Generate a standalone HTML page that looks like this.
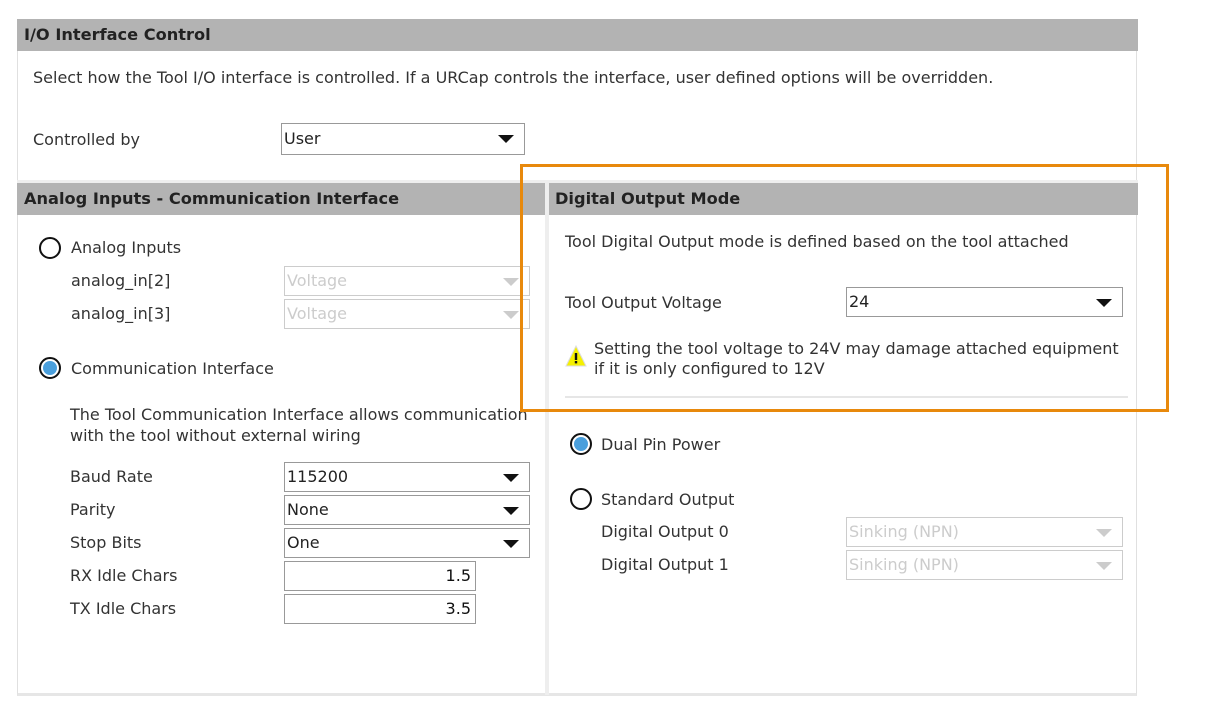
<!DOCTYPE html>
<html><head><style>
body{margin:0;width:1213px;height:728px;background:#fff;position:relative;overflow:hidden;font-family:"DejaVu Sans","Liberation Sans",sans-serif;font-size:16px;color:#333}
.a{position:absolute;white-space:nowrap}
.hd{position:absolute;background:#b3b3b3;font-weight:bold;color:#222;font-size:16.2px;line-height:32px;padding-left:7px;box-sizing:border-box}
.sel{position:absolute;border:1px solid #999;background:#fff;box-sizing:border-box;height:30px;line-height:28px;padding-left:2px;color:#222}
.sel.dis{border-color:#ccc;color:#ccc}
.sel:after{content:"";position:absolute;right:10px;top:11px;border-left:8px solid transparent;border-right:8px solid transparent;border-top:8px solid #111}
.sel.dis:after{border-top-color:#ccc}
.inp{position:absolute;border:1px solid #999;background:#fff;box-sizing:border-box;height:30px;line-height:28px;text-align:right;padding-right:4px;color:#111}
.rad{position:absolute;width:22px;height:22px;border:2px solid #111;border-radius:50%;box-sizing:border-box;background:#fff}
.rad.on:after{content:"";position:absolute;left:2px;top:2px;width:14px;height:14px;border-radius:50%;background:#4a9fdc}
</style></head><body>
<div class="a" style="left:17px;top:19px;width:1120px;height:677px;border:1px solid #e0e0e0;border-bottom:3px solid #e6e6e6;box-sizing:border-box"></div>
<div class="hd" style="left:17px;top:19px;width:1121px;height:32px">I/O Interface Control</div>
<div class="a" style="left:33px;top:68px">Select how the Tool I/O interface is controlled. If a URCap controls the interface, user defined options will be overridden.</div>
<div class="a" style="left:33px;top:130px">Controlled by</div>
<div class="sel" style="left:281px;top:123px;width:244px;height:32px;line-height:30px">User</div>
<div class="a" style="left:17px;top:180px;width:1121px;height:3px;background:#eee"></div>
<div class="hd" style="left:17px;top:183px;width:528px;height:32px">Analog Inputs - Communication Interface</div>
<div class="a" style="left:545px;top:183px;width:4px;height:512px;background:#eee"></div>
<div class="hd" style="left:549px;top:183px;width:589px;height:32px;padding-left:6px">Digital Output Mode</div>

<div class="rad" style="left:39px;top:237px"></div>
<div class="a" style="left:71px;top:238px">Analog Inputs</div>
<div class="a" style="left:71px;top:271px">analog_in[2]</div>
<div class="sel dis" style="left:284px;top:266px;width:246px">Voltage</div>
<div class="a" style="left:71px;top:304px">analog_in[3]</div>
<div class="sel dis" style="left:284px;top:299px;width:246px">Voltage</div>
<div class="rad on" style="left:39px;top:357px"></div>
<div class="a" style="left:71px;top:359px">Communication Interface</div>
<div class="a" style="left:70px;top:404px;line-height:21px">The Tool Communication Interface allows communication<br>with the tool without external wiring</div>
<div class="a" style="left:70px;top:467px">Baud Rate</div>
<div class="sel" style="left:284px;top:462px;width:246px">115200</div>
<div class="a" style="left:70px;top:500px">Parity</div>
<div class="sel" style="left:284px;top:495px;width:246px">None</div>
<div class="a" style="left:70px;top:533px">Stop Bits</div>
<div class="sel" style="left:284px;top:528px;width:246px">One</div>
<div class="a" style="left:70px;top:566px">RX Idle Chars</div>
<div class="inp" style="left:284px;top:561px;width:192px">1.5</div>
<div class="a" style="left:70px;top:599px">TX Idle Chars</div>
<div class="inp" style="left:284px;top:594px;width:192px">3.5</div>

<div class="a" style="left:565px;top:232px">Tool Digital Output mode is defined based on the tool attached</div>
<div class="a" style="left:565px;top:293px">Tool Output Voltage</div>
<div class="sel" style="left:846px;top:287px;width:277px">24</div>
<svg class="a" style="left:565px;top:344px" width="22" height="24" viewBox="0 0 22 24"><path d="M11 2 L21 22 L1 22 Z" fill="#f5f000" stroke="#ddd" stroke-width="1"/><rect x="9.8" y="9" width="2.4" height="7" fill="#111"/><rect x="9.8" y="17" width="2.4" height="2.4" fill="#111"/></svg>
<div class="a" style="left:594px;top:339px;line-height:20px">Setting the tool voltage to 24V may damage attached equipment<br>if it is only configured to 12V</div>
<div class="a" style="left:565px;top:396px;width:563px;height:2px;background:#e6e6e6"></div>
<div class="rad on" style="left:570px;top:433px"></div>
<div class="a" style="left:601px;top:435px">Dual Pin Power</div>
<div class="rad" style="left:570px;top:488px"></div>
<div class="a" style="left:601px;top:490px">Standard Output</div>
<div class="a" style="left:601px;top:522px">Digital Output 0</div>
<div class="sel dis" style="left:846px;top:517px;width:277px">Sinking (NPN)</div>
<div class="a" style="left:601px;top:555px">Digital Output 1</div>
<div class="sel dis" style="left:846px;top:550px;width:277px">Sinking (NPN)</div>

<div class="a" style="left:520px;top:164px;width:649px;height:248px;border:3px solid #e8890c;box-sizing:border-box"></div>
</body></html>
